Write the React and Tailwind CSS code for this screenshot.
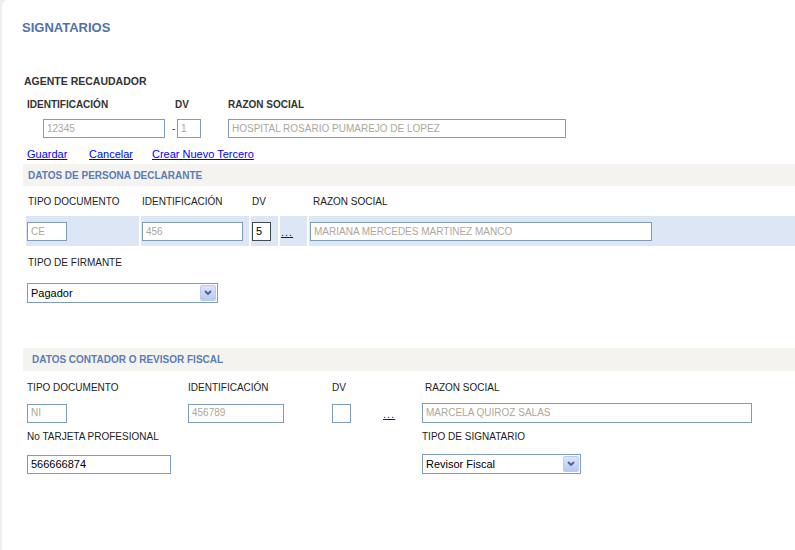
import React from "react";

const inBorder = "border border-[#7f9db9]";

function Field({ w, h = 19, value, dark = false, strong = false, className = "" }) {
  return (
    <div
      className={`${strong ? "border border-[#3f4b5c]" : inBorder} bg-white flex items-center pl-[3px] overflow-hidden whitespace-nowrap ${dark ? "text-[11px] text-black" : "text-[10px] text-[#aca899]"} ${className}`}
      style={{ width: w, height: h }}
    >
      {value}
    </div>
  );
}

function SelectBox({ w, value }) {
  return (
    <div className={`${inBorder} bg-white flex items-center justify-between h-[20px]`} style={{ width: w }}>
      <span className="pl-[3px] text-[11px] text-black">{value}</span>
      <span className="mr-[1px] w-[16px] h-[16px] rounded-[2px] border border-[#b9cbef] bg-gradient-to-b from-[#dbe5fb] to-[#b7c9f3] flex items-center justify-center">
        <svg width="8" height="6" viewBox="0 0 8 6">
          <path d="M1 1 L4 4 L7 1" fill="none" stroke="#4d6185" strokeWidth="1.8" />
        </svg>
      </span>
    </div>
  );
}

function Dots() {
  return <span className="text-[11px] tracking-[1px] text-[#0000ff] underline leading-none">...</span>;
}

export default function App() {
  return (
    <div className="w-[795px] h-[550px] bg-[#efefef] font-['Liberation_Sans',Arial,sans-serif] overflow-hidden">
      <div className="ml-[2px] h-full bg-white rounded-tl-[6px] flex flex-col">
        {/* Title */}
        <div className="mt-[20px] h-[16px] leading-[16px] pl-[20px] text-[13px] font-bold text-[#4f72ad]">
          SIGNATARIOS
        </div>

        {/* Agente recaudador */}
        <div className="mt-[38px] h-[14px] leading-[14px] pl-[22px] text-[10.5px] font-bold text-[#333]">
          AGENTE RECAUDADOR
        </div>
        <div className="mt-[10px] h-[14px] leading-[14px] flex text-[10px] font-bold text-[#333]">
          <span className="ml-[25px] w-[148px]">IDENTIFICACIÓN</span>
          <span className="w-[53px]">DV</span>
          <span>RAZON SOCIAL</span>
        </div>
        <div className="mt-[7px] flex items-center">
          <Field className="ml-[41px]" w={122} value="12345" />
          <span className="ml-[7px] w-[5px] text-[10px] leading-none text-[#333]">-</span>
          <Field w={24} value="1" />
          <Field className="ml-[27px]" w={338} value="HOSPITAL ROSARIO PUMAREJO DE LOPEZ" />
        </div>
        <div className="mt-[9px] h-[14px] leading-[14px] flex text-[11px] text-[#0000ff] underline">
          <span className="ml-[25px] w-[62px]">Guardar</span>
          <span className="w-[63px]">Cancelar</span>
          <span>Crear Nuevo Tercero</span>
        </div>

        {/* Datos de persona declarante */}
        <div className="mt-[3px] ml-[21px] h-[22px] bg-[#f4f3ef] flex items-center pl-[5px] text-[10px] font-bold text-[#5b7db5]">
          DATOS DE PERSONA DECLARANTE
        </div>
        <div className="h-[30px] flex items-center text-[10px] text-[#222]">
          <span className="ml-[26px] w-[114px]">TIPO DOCUMENTO</span>
          <span className="w-[110px]">IDENTIFICACIÓN</span>
          <span className="w-[61px]">DV</span>
          <span>RAZON SOCIAL</span>
        </div>
        <div className="h-[30px] flex gap-[2px] ml-[24px]">
          <div className="w-[113px] bg-[#dce6f4] flex items-center pl-[1px]">
            <Field w={40} value="CE" />
          </div>
          <div className="w-[108px] bg-[#dce6f4] flex items-center pl-[1px]">
            <Field w={101} value="456" />
          </div>
          <div className="w-[27px] bg-[#dce6f4] flex items-center pl-[1px]">
            <Field w={19} strong dark value="5" />
          </div>
          <div className="w-[27px] bg-[#dce6f4] flex items-center pl-[1px] pt-[2px]">
            <Dots />
          </div>
          <div className="flex-1 bg-[#dce6f4] flex items-center pl-[1px]">
            <Field w={342} value="MARIANA MERCEDES MARTINEZ MANCO" />
          </div>
        </div>
        <div className="mt-[10px] h-[14px] leading-[14px] pl-[26px] text-[10px] text-[#222]">TIPO DE FIRMANTE</div>
        <div className="mt-[13px] pl-[25px]">
          <SelectBox w={191} value="Pagador" />
        </div>

        {/* Datos contador o revisor fiscal */}
        <div className="mt-[45px] ml-[21px] h-[23px] bg-[#f4f3ef] flex items-center pl-[9px] text-[10px] font-bold text-[#5b7db5]">
          DATOS CONTADOR O REVISOR FISCAL
        </div>
        <div className="mt-[10px] h-[14px] leading-[14px] flex text-[10px] text-[#222]">
          <span className="ml-[25px] w-[161px]">TIPO DOCUMENTO</span>
          <span className="w-[144px]">IDENTIFICACIÓN</span>
          <span className="w-[93px]">DV</span>
          <span>RAZON SOCIAL</span>
        </div>
        <div className="mt-[8px] h-[20px] flex items-center text-[11px] leading-none">
          <Field className="ml-[25px]" w={40} value="NI" />
          <Field className="ml-[121px]" w={96} value="456789" />
          <Field className="ml-[48px]" w={19} value="" />
          <span className="ml-[32px] w-[39px] pt-[2px] leading-none"><Dots /></span>
          <Field w={330} h={20} value="MARCELA QUIROZ SALAS" />
        </div>
        <div className="mt-[7px] h-[14px] leading-[14px] flex text-[10px] text-[#222]">
          <span className="ml-[25px] w-[395px]">No TARJETA PROFESIONAL</span>
          <span>TIPO DE SIGNATARIO</span>
        </div>
        <div className="mt-[10px] flex items-center">
          <Field className="ml-[25px]" w={144} dark value="566666874" />
          <div className="ml-[251px]">
            <SelectBox w={159} value="Revisor Fiscal" />
          </div>
        </div>
      </div>
    </div>
  );
}
